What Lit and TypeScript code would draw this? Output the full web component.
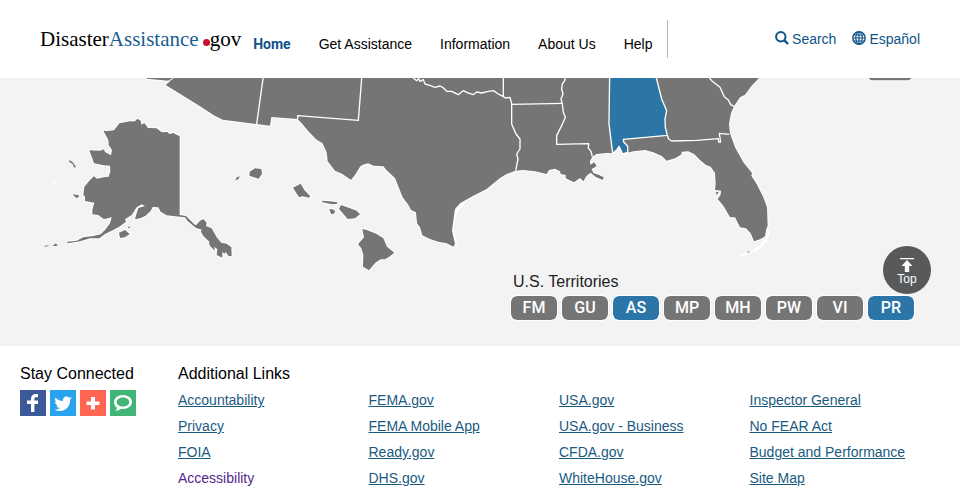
import { LitElement, html, css, svg } from "lit";
import { customElement } from "lit/decorators.js";
import { classMap } from "lit/directives/class-map.js";

const NAV = ["Home", "Get Assistance", "Information", "About Us", "Help"];

const TERRITORIES = ["FM", "GU", "AS", "MP", "MH", "PW", "VI", "PR"];
const DECLARED = new Set(["AS", "PR"]);

const LINKS: string[][] = [
  ["Accountability", "Privacy", "FOIA", "Accessibility"],
  ["FEMA.gov", "FEMA Mobile App", "Ready.gov", "DHS.gov"],
  ["USA.gov", "USA.gov - Business", "CFDA.gov", "WhiteHouse.gov"],
  ["Inspector General", "No FEAR Act", "Budget and Performance", "Site Map"],
];

const SOCIAL = [
  {
    name: "Facebook",
    kind: "facebook",
    icon: svg`<path d="M11 22v-8H7v-3.500h4V9c0-3.400 2-5 5-5h2v3.200h-2c-1.300 0-1.600.6-1.600 1.800v1.500H18V14h-3.600v8z"/>`,
  },
  {
    name: "Twitter",
    kind: "twitter",
    icon: svg`<path d="M22 7.800l-1.900 1.900c.2 6.800-4.700 11.300-10 11.300-2 0-4-.6-5.400-1.600 2 .1 3.700-.4 5-1.500-1.600-.1-2.800-1.100-3.300-2.500h1.500c-1.700-.5-2.800-1.900-2.800-3.600l1.500.4C5 11 4.600 8.900 5.500 7.400c1.900 2.200 4.300 3.500 7.500 3.700-.4-2.600 1.300-4.500 3.600-4.500 1.100 0 2 .4 2.700 1.100l2.300-.9-1.500 1.900z"/>`,
  },
  {
    name: "More sharing options",
    kind: "more",
    icon: svg`<path d="M11 7h4v4.500h4.500v3.500H15v4.500h-4V15H6.500v-3.500H11z"/>`,
  },
  {
    name: "GovDelivery",
    kind: "delivery",
    icon: svg`<path fill-rule="evenodd" d="M13 5c5 0 9 3 9 7s-4 7-9 7l-2-.2C9.500 20.200 7.500 20.800 5.200 20.700c1.200-.8 1.700-1.700 1.800-2.900C5 16.500 4 14.500 4 12c0-4 4-7 9-7zm0 2.500c-3.500 0-6.300 2-6.300 4.500s2.800 4.500 6.300 4.500 6.300-2 6.300-4.500-2.800-4.500-6.300-4.500z"/>`,
  },
];

@customElement("us-map")
export class UsMap extends LitElement {
  static styles = css`
    :host {
      display: block;
    }
    .map {
      display: block;
      width: 100%;
      height: auto;
    }
    .land {
      fill: #757575;
      stroke: #fff;
      stroke-width: 6;
      stroke-linejoin: round;
      paint-order: stroke;
    }
    .declared {
      fill: #2b76a7;
      paint-order: normal;
      stroke-width: 4;
    }
    .border {
      fill: none;
      stroke: #fff;
      stroke-width: 4;
      stroke-linejoin: round;
    }
    .reef {
      stroke-width: 8;
      stroke-linecap: round;
    }
    .speck {
      stroke-width: 3;
    }
  `;

  render() {
    return html`
      <svg class="map" viewBox="0 234 2880 804" role="img" aria-label="Map of the United States">
        <g transform="translate(1020 222)">
          <path class="border reef" d="M368 390Q346 412 339 440 335 480 348 510"/>
        </g>
        <path class="land" d="M515 222L510 244 497 255 600 319 645 348 668 359 770 372 810 377 814 351 893 357 907 372 925 394 950 419 967 429 980 457 983 484 1005 512 1027 522 1053 540 1067 522 1080 500 1088 494 1105 490 1120 497 1150 499 1160 511 1185 534 1193 554 1208 592 1225 614 1233 630 1248 637 1251 670 1260 682 1267 706 1290 717 1315 725 1340 730 1360 740 1365 732 1356 692 1362 647 1365 627 1380 610 1420 587 1460 567 1500 534 1520 522 1547 512 1570 510 1605 514 1640 522 1647 510 1665 506 1680 514 1682 522 1697 525 1697 535 1722 547 1740 534 1750 544 1760 527 1772 518 1786 530 1808 540 1812 532 1795 524 1780 519 1775 507 1790 499 1783 487 1771 494 1770 484 1777 470 1790 462 1820 459 1835 460 1850 450 1857 439 1868 462 1900 454 1935 450 1960 457 1985 468 2000 482 2025 475 2043 464 2046 455 2065 454 2082 462 2100 480 2118 495 2132 500 2145 519 2147 552 2145 570 2163 572 2162 584 2153 597 2170 617 2190 652 2205 652 2220 682 2238 685 2252 700 2262 724 2280 718 2295 709 2298 690 2303 677 2301 622 2290 592 2270 552 2254 527 2256 519 2230 487 2205 442 2190 400 2187 372 2193 340 2202 319 2220 292 2235 284 2255 257 2275 236 2275 222Z"/>
        <path class="land" d="M440 222V236L505 242 517 234V222Z"/>
        <rect class="land" x="2604" y="200" width="132" height="41" rx="14"/>
        <path class="land declared" d="M1829 222L1827 372 1838 460 1850 450 1857 439 1868 462 1883 457 1883 438 1871 426 1870 418 2002 406 1996 382 1995 357 2000 332 1985 297 1966 222Z"/>

        <g transform="translate(450 222)">
          <path class="border" d="M341 0L320 150M636 0L625 139 443 125V135"/>
        </g>
        <g transform="translate(1020 222)">
          <path class="border" d="M215 8L230 20 236 14 240 22 250 17 255 30 270 34 285 40 300 36 308 40 320 52 335 52 355 62 362 56 370 50 382 56 400 62 410 54 425 57 445 52 460 50 475 60 490 68 497 72 510 70 515 88 515 150 528 180 540 195 540 225 530 240 534 255 527 290M490 0V68M515 91L667 88"/>
        </g>
        <g transform="translate(1500 222)">
          <path class="border" d="M196 10L194 20 187 30 185 45 189 60 183 75 187 90 190 115 196 130 185 155 170 185 170 211 266 209 265 222 273 232 277 248"/>
        </g>
        <g transform="translate(1860 222)">
          <path class="border" d="M142 184L146 195 155 201 230 199 295 194 296 204 302 204 298 178 328 181M265 8L275 20 300 40 313 68 325 78 332 92 342 97"/>
          <path class="border reef" d="M446 472Q442 500 420 518L402 530M390 534L364 543"/>
          <path class="land speck" d="M287 353L296 355 290 363ZM378 536L388 531 389 535Z"/>
        </g>

        <g transform="translate(90 300)">
          <path class="land" d="M220 92L233 93 252 91 268 70 300 64 315 64 322 56 332 62 334 74 343 69 354 84 380 85 395 97 412 96 418 102 430 99 449 109V345L468 348 492 372 498 376 510 362 520 357 530 368 528 378 545 385 560 412 574 428 590 431 604 442 605 468 596 469 587 455 585 462 577 456 577 473 560 465 562 448 553 440 555 452 542 440 537 432 538 425 520 408 512 394 516 389 498 384 472 362 465 352 450 350 410 346 392 335 385 322 368 321 362 333 346 348 330 355 315 358 320 340 325 324 345 318 335 313 320 322 305 345 285 358 288 365 268 380 245 392 225 402 208 415 180 415 150 424 112 430 112 425 140 422 160 412 190 408 212 403 225 390 240 370 245 352 222 358 205 345 187 343 187 330 193 308 180 306 165 303 165 290 160 284 163 260 180 240 192 228 200 236 225 231 236 230 241 214 240 197 220 196 192 190 185 170 178 151 210 152 222 148 225 156 243 166 246 150 236 135 235 120Z"/>
          <path class="land" d="M267 398L285 390 299 402 285 412 270 414Z"/>
          <path class="land speck" d="M117 180L127 185 138 200 132 203 128 192 118 186ZM128 283L147 286 146 292 138 294ZM40 438L60 435 48 440ZM67 438L78 430 83 438ZM292 380L304 380 296 385Z"/>
          <path class="border" d="M70 242L75 252"/>
        </g>

        <g transform="translate(660 450)">
          <path class="land" d="M89 65L105 55 124 57 126 72 116 86 102 82 88 77ZM219 113L242 101 253 120 270 138 268 143 248 139 237 142ZM305 152L330 154 353 157 350 162 335 163 308 157ZM327 178L338 178 346 184 342 191 334 193ZM357 176L363 165 390 175 410 182 420 193 405 205 383 207ZM427 237L440 240 470 252 490 265 501 290 523 308 508 320 495 328 482 328 466 338 447 361 429 350 430 315 424 295 414 283 432 262Z"/>
          <path class="land speck" d="M46 91L50 82 60 79 55 88Z"/>
        </g>
      </svg>
    `;
  }
}

@customElement("app-root")
export class AppRoot extends LitElement {
  static styles = css`
    :host {
      display: block;
      font: 14px/20px "Liberation Sans", Arial, sans-serif;
      color: #000;
      background: #fff;
    }
    a {
      text-decoration: none;
      color: inherit;
    }
    ul {
      list-style: none;
      margin: 0;
      padding: 0;
    }
    h2 {
      margin: 0;
      font-size: 16px;
      line-height: 20px;
      font-weight: 400;
    }
    .header {
      display: flex;
      align-items: center;
      height: 78px;
      box-sizing: border-box;
      padding: 0 40px;
    }
    .logo {
      display: flex;
      align-items: baseline;
      font: 21px/24px "Liberation Serif", "Times New Roman", serif;
    }
    .assist {
      color: #1a5e93;
    }
    .dot {
      width: 7px;
      height: 7px;
      margin-left: 4px;
      border-radius: 50%;
      background: #c8102e;
    }
    .nav {
      display: flex;
      align-self: stretch;
      align-items: center;
      gap: 28px;
      margin: 20px 0 20px 12px;
      padding: 10px 15px 0 0;
      box-sizing: border-box;
      border-right: 1px solid #bbb;
    }
    .current {
      font-weight: 700;
      font-family: Roboto, sans-serif;
      color: #0e5388;
    }
    .tools {
      display: flex;
      gap: 16px;
      margin-left: auto;
      color: #0e5388;
    }
    .tool {
      display: flex;
      align-items: center;
      gap: 3px;
    }
    .glyph {
      width: 14px;
      height: 14px;
      margin-bottom: 3px;
      fill: none;
      stroke: currentColor;
    }
    .area {
      position: relative;
      display: grid;
      background: #f3f3f3;
    }
    .area > * {
      grid-area: 1 / 1;
    }
    .territories {
      place-self: end;
      margin: 0 46px 26px 0;
      color: #222;
    }
    .caption {
      padding-left: 2px;
    }
    .pills {
      display: flex;
      gap: 5px;
      margin-top: 4px;
    }
    .pill {
      display: block;
      width: 46px;
      height: 24px;
      padding: 0;
      border: 0;
      border-radius: 6px;
      outline: 1px solid #fff;
      background: #757575;
      color: #fff;
      font: 500 16px/24px Roboto, sans-serif;
    }
    .declared {
      background: #2b76a7;
    }
    .top {
      position: absolute;
      right: 29px;
      bottom: 52px;
      display: flex;
      flex-direction: column;
      align-items: center;
      width: 48px;
      height: 48px;
      padding: 12px 0 0;
      border: 0;
      border-radius: 50%;
      background: #58595b;
      color: #fff;
      font: 12px/14px "Liberation Sans", Arial, sans-serif;
    }
    .arrow {
      display: block;
      width: 14px;
      height: 14px;
      fill: #fff;
    }
    .footer {
      display: grid;
      grid-template-columns: 158px 1fr;
      padding: 18px 20px 0;
    }
    .social {
      display: flex;
      gap: 4px;
      margin-top: 6px;
    }
    .badge {
      display: block;
      width: 26px;
      height: 26px;
      fill: #fff;
    }
    .facebook {
      background: #3b5998;
    }
    .twitter {
      background: #2aa3ef;
    }
    .more {
      background: #ff6550;
    }
    .delivery {
      background: #40b575;
    }
    .columns {
      display: grid;
      grid-template-columns: repeat(4, 1fr);
      margin-top: 3px;
    }
    .row {
      line-height: 26px;
    }
    .link {
      color: #1a5a82;
      text-decoration: underline;
    }
    .visited {
      color: #54278f;
      text-decoration: none;
    }
  `;

  render() {
    return html`
      <header class="header">
        <a class="logo" href="#">
          <span>Disaster</span><span class="assist">Assistance</span><span class="dot"></span><span>gov</span>
        </a>
        <nav class="nav" aria-label="Main">
          ${NAV.map(
            (item, i) => html`<a class=${classMap({ current: i === 0 })} href="#">${item}</a>`
          )}
        </nav>
        <div class="tools">
          <a class="tool" href="#">
            <svg class="glyph" viewBox="0 0 14 14" aria-hidden="true">
              <circle cx="5.800" cy="5.800" r="4.700" stroke-width="2" />
              <path d="M9.200 9.200L13 13" stroke-width="2.400" />
            </svg>
            Search
          </a>
          <a class="tool" href="#">
            <svg class="glyph" viewBox="0 0 14 14" aria-hidden="true">
              <circle cx="7" cy="7" r="6.200" stroke-width="1.400" />
              <path d="M7 1V13M1 7H13M2 4H12M2 10H12" stroke-width="1.200" />
              <ellipse cx="7" cy="7" rx="3.200" ry="6" stroke-width="1.200" />
            </svg>
            Español
          </a>
        </div>
      </header>

      <main class="area" id="top">
        <us-map></us-map>
        <section class="territories">
          <h2 class="caption">U.S. Territories</h2>
          <div class="pills">
            ${TERRITORIES.map(
              (code) =>
                html`<button class=${classMap({ pill: true, declared: DECLARED.has(code) })}>${code}</button>`
            )}
          </div>
        </section>
        <button class="top">
          <svg class="arrow" viewBox="0 0 14 14" aria-hidden="true">
            <path d="M0 0H14V1.200H0zM7 2L12.500 8H9.200V14H4.800V8H1.500z" />
          </svg>
          Top
        </button>
      </main>

      <footer class="footer">
        <section>
          <h2>Stay Connected</h2>
          <div class="social">
            ${SOCIAL.map(
              (s) => html`<a class="badge ${s.kind}" href="#" aria-label=${s.name}>
                <svg class="badge" viewBox="0 0 26 26" aria-hidden="true">${s.icon}</svg>
              </a>`
            )}
          </div>
        </section>
        <section>
          <h2>Additional Links</h2>
          <div class="columns">
            ${LINKS.map(
              (column) => html`<ul>
                ${column.map(
                  (text) => html`<li class="row">
                    <a class=${classMap({ link: true, visited: text === "Accessibility" })} href="#">${text}</a>
                  </li>`
                )}
              </ul>`
            )}
          </div>
        </section>
      </footer>
    `;
  }
}
